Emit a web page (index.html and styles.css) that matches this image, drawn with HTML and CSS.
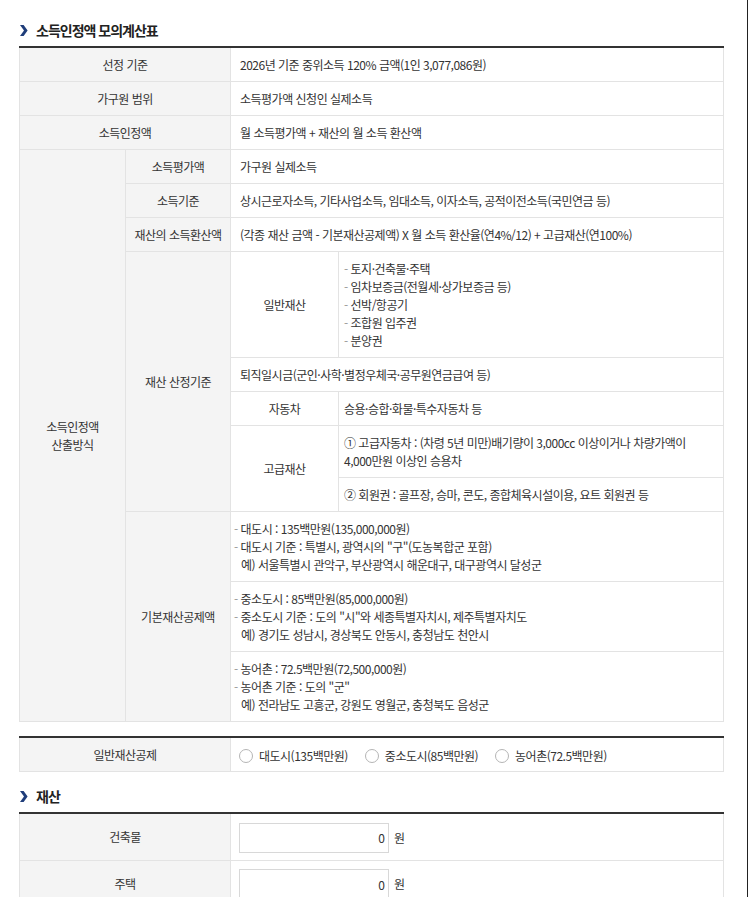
FILE: index.html
```html
<!DOCTYPE html>
<html lang="ko">
<head>
<meta charset="utf-8">
<title>소득인정액 모의계산표</title>
<link rel="stylesheet" href="styles.css">
</head>
<body>
<div class="page">
  <h2 class="heading">
    <svg width="8" height="11" viewBox="0 0 8 11"><polygon points="0,0 3.6,0 7.6,5.5 3.6,11 0,11 4,5.5" fill="#1f3d7a"/></svg>
    <span>소득인정액 모의계산표</span>
  </h2>
  <table class="tbl">
    <colgroup><col class="c1"><col class="c2"><col class="c3"><col class="c4"></colgroup>
    <tr><th colspan="2">선정 기준</th><td colspan="2">2026년 기준 중위소득 120% 금액(1인 3,077,086원)</td></tr>
    <tr><th colspan="2">가구원 범위</th><td colspan="2">소득평가액 신청인 실제소득</td></tr>
    <tr><th colspan="2">소득인정액</th><td colspan="2">월 소득평가액 + 재산의 월 소득 환산액</td></tr>
    <tr><th rowspan="11">소득인정액<br>산출방식</th><th>소득평가액</th><td colspan="2">가구원 실제소득</td></tr>
    <tr><th>소득기준</th><td colspan="2">상시근로자소득, 기타사업소득, 임대소득, 이자소득, 공적이전소득(국민연금 등)</td></tr>
    <tr><th>재산의 소득환산액</th><td colspan="2">(각종 재산 금액 - 기본재산공제액) X 월 소득 환산율(연4%/12) + 고급재산(연100%)</td></tr>
    <tr><th rowspan="5">재산 산정기준</th><th class="sub">일반재산</th>
      <td class="list"><span class="d">-</span> 토지·건축물·주택<br><span class="d">-</span> 임차보증금(전월세·상가보증금 등)<br><span class="d">-</span> 선박/항공기<br><span class="d">-</span> 조합원 입주권<br><span class="d">-</span> 분양권</td></tr>
    <tr><td colspan="2">퇴직일시금(군인·사학·별정우체국·공무원연금급여 등)</td></tr>
    <tr><th class="sub">자동차</th><td class="list">승용·승합·화물·특수자동차 등</td></tr>
    <tr><th class="sub" rowspan="2">고급재산</th><td class="list">① 고급자동차 : (차령 5년 미만)배기량이 3,000cc 이상이거나 차량가액이<br>4,000만원 이상인 승용차</td></tr>
    <tr><td class="list">② 회원권 : 골프장, 승마, 콘도, 종합체육시설이용, 요트 회원권 등</td></tr>
    <tr><th rowspan="3">기본재산공제액</th>
      <td colspan="2" class="base"><span class="d">-</span> 대도시 : 135백만원(135,000,000원)<br><span class="d">-</span> 대도시 기준 : 특별시, 광역시의 "구"(도농복합군 포함)<br><span class="ex">예) 서울특별시 관악구, 부산광역시 해운대구, 대구광역시 달성군</span></td></tr>
    <tr><td colspan="2" class="base"><span class="d">-</span> 중소도시 : 85백만원(85,000,000원)<br><span class="d">-</span> 중소도시 기준 : 도의 "시"와 세종특별자치시, 제주특별자치도<br><span class="ex">예) 경기도 성남시, 경상북도 안동시, 충청남도 천안시</span></td></tr>
    <tr><td colspan="2" class="base"><span class="d">-</span> 농어촌 : 72.5백만원(72,500,000원)<br><span class="d">-</span> 농어촌 기준 : 도의 "군"<br><span class="ex">예) 전라남도 고흥군, 강원도 영월군, 충청북도 음성군</span></td></tr>
  </table>

  <table class="tbl tbl2">
    <colgroup><col class="k1"><col class="k2"></colgroup>
    <tr><th>일반재산공제</th>
      <td class="radiocell"><div class="radios">
        <label class="radio"><span class="circle"></span>대도시(135백만원)</label>
        <label class="radio"><span class="circle"></span>중소도시(85백만원)</label>
        <label class="radio"><span class="circle"></span>농어촌(72.5백만원)</label>
      </div></td></tr>
  </table>

  <h2 class="heading heading2">
    <svg width="8" height="11" viewBox="0 0 8 11"><polygon points="0,0 3.6,0 7.6,5.5 3.6,11 0,11 4,5.5" fill="#1f3d7a"/></svg>
    <span>재산</span>
  </h2>
  <table class="tbl">
    <colgroup><col class="k1"><col class="k2"></colgroup>
    <tr><th class="inh">건축물</th><td class="inp"><input type="text" value="0"><span class="unit">원</span></td></tr>
    <tr><th class="inh">주택</th><td class="inp"><input type="text" value="0"><span class="unit">원</span></td></tr>
  </table>
</div>
</body>
</html>
```
FILE: styles.css
```css
* { box-sizing: border-box; }
html, body { margin: 0; padding: 0; background: #fff; }
body {
  font-family: "Noto Sans CJK KR", "Noto Sans", sans-serif;
  font-size: 12px;
  letter-spacing: -0.5px;
  color: #333;
}
.page {
  width: 748px;
  height: 897px;
  overflow: hidden;
  border-right: 1px solid #222;
  padding: 20px 0 0 19px;
}
.heading {
  display: flex;
  align-items: center;
  gap: 8px;
  height: 20px;
  margin: 0 0 6px;
  font-size: 14px;
  font-weight: bold;
  color: #222;
  letter-spacing: -1px;
}
.heading svg { display: block; margin-left: 1px; }
.heading2 { margin-top: 14px; }

.tbl {
  width: 704px;
  border-collapse: collapse;
  table-layout: fixed;
  border-top: 2px solid #333;
}
.tbl .c1 { width: 106px; }
.tbl .c2 { width: 105px; }
.tbl .c3 { width: 108px; }
.tbl .c4 { width: 385px; }
.tbl .k1 { width: 211px; }
.tbl .k2 { width: 493px; }

.tbl th, .tbl td {
  border: 1px solid #e3e3e3;
  padding: 8px 0 7px;
  line-height: 18px;
  vertical-align: middle;
}
.tbl th {
  background: #f4f4f4;
  font-weight: normal;
  text-align: center;
}
.tbl th.sub { background: #fff; }
.tbl td { text-align: left; padding-left: 9px; }
.tbl td.list { padding-left: 5px; }
.tbl td.base { padding-left: 3px; }
.d { color: #999; }
.ex { padding-left: 7px; }

.tbl2 { margin-top: 14px; }
.tbl td.radiocell { padding: 8px 0 6px 8px; }
.radios { display: flex; align-items: center; height: 18px; }
.radio { display: inline-flex; align-items: center; margin-right: 17px; }
.circle {
  width: 14px;
  height: 14px;
  border: 1px solid #b5b5b5;
  border-radius: 50%;
  background: #fff;
  margin-right: 6px;
}
.tbl th.inh { padding: 0; height: 46px; }
.tbl td.inp {
  padding: 7px 8px 7px;
  line-height: 30px;
  height: 46px;
}
.inp input {
  width: 150px;
  height: 30px;
  border: 1px solid #d8d8d8;
  padding: 0 3px 0 0;
  margin: 0;
  text-align: right;
  font-family: inherit;
  font-size: 12px;
  color: #333;
  vertical-align: middle;
  outline: none;
}
.unit { margin-left: 5px; vertical-align: middle; }
```
